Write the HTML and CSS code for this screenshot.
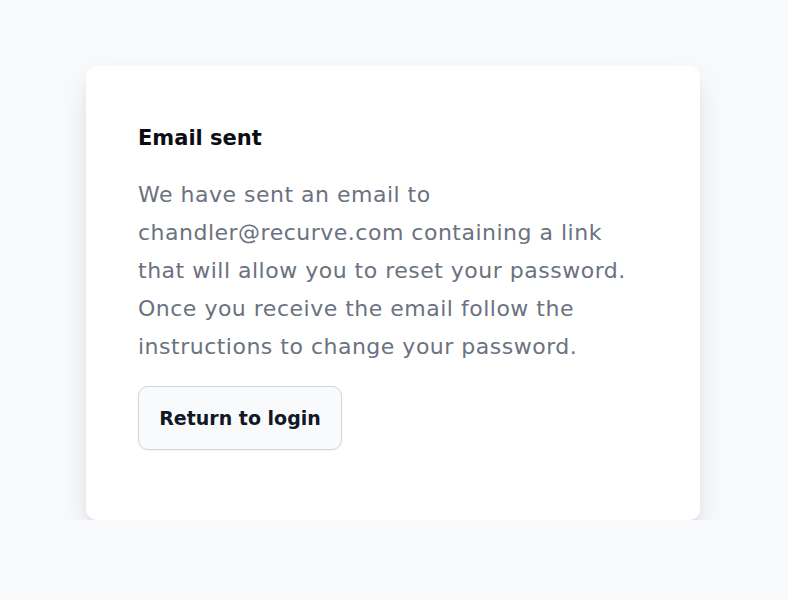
FILE: index.html
```html
<!DOCTYPE html>
<html>
<head>
<meta charset="utf-8">
<link rel="stylesheet" href="styles.css">
</head>
<body>
<main class="page">
  <section class="card">
    <h1 class="title">Email sent</h1>
    <p class="message">We have sent an email to chandler@recurve.com containing a link that will allow you to reset your password. Once you receive the email follow the instructions to change your password.</p>
    <button class="btn" type="button">Return to login</button>
  </section>
</main>
</body>
</html>
```

FILE: styles.css
```css
html, body {
  margin: 0;
  padding: 0;
  background: #f8f9fb;
  font-family: "DejaVu Sans", sans-serif;
}
.page {
  display: flex;
  justify-content: center;
  align-items: flex-start;
  padding-top: 66px;
  padding-right: 2px;
}
.card {
  width: 614px;
  box-sizing: border-box;
  background: #ffffff;
  border-radius: 11px;
  padding: 54px 52px 70px 52px;
  box-shadow: 0 14px 28px -4px rgba(17, 24, 39, 0.13), 0 6px 10px -4px rgba(17, 24, 39, 0.08);
  display: flex;
  flex-direction: column;
  align-items: flex-start;
}
.title {
  margin: 0;
  font-size: 21px;
  line-height: 36px;
  font-weight: 700;
  color: #0b0d12;
}
.message {
  margin: 20px 0 0 0;
  font-size: 22px;
  line-height: 38px;
  letter-spacing: 0.5px;
  color: #6b7280;
  width: 505px;
}
.btn {
  margin-top: 20px;
  width: 204px;
  height: 64px;
  background: #f9fafb;
  border: 1.5px solid #d1d5db;
  border-radius: 10px;
  font-family: inherit;
  font-size: 19px;
  font-weight: 700;
  color: #111827;
  box-shadow: 0 1px 2px rgba(0,0,0,0.05);
  padding: 0;
}
```
